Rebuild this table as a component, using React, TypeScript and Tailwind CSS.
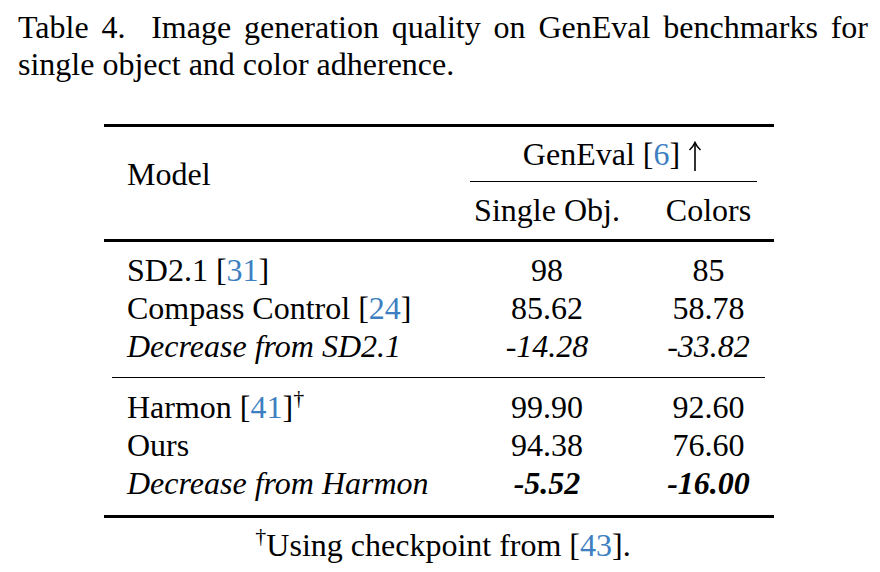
import React from 'react';

type Cell = { text: React.ReactNode; style?: 'italic' | 'bold' };

interface Row {
    model: React.ReactNode;
    single: Cell;
    colors: Cell;
}

const Cite = ({ n }: { n: number }) => <span className="text-[#3d7fc1]">{n}</span>;

// thin up arrow, drawn since the serif font has no tall arrow glyph
const UpArrow = () => (
    <svg className="inline-block align-baseline -mb-[6px]" width="14" height="30" viewBox="0 0 14 30" fill="none" stroke="black" strokeWidth="1.6">
        <path d="M7 2 V30" />
        <path d="M1.5 9 Q5 6 7 1.5 Q9 6 12.5 9" />
    </svg>
);

const groups: Row[][] = [
    [
        { model: <>SD2.1 [<Cite n={31} />]</>, single: { text: '98' }, colors: { text: '85' } },
        { model: <>Compass Control [<Cite n={24} />]</>, single: { text: '85.62' }, colors: { text: '58.78' } },
        { model: <i>Decrease from SD2.1</i>, single: { text: '-14.28', style: 'italic' }, colors: { text: '-33.82', style: 'italic' } },
    ],
    [
        { model: <>Harmon [<Cite n={41} />]<sup className="text-[22px] -top-[13px]">†</sup></>, single: { text: '99.90' }, colors: { text: '92.60' } },
        { model: <>Ours</>, single: { text: '94.38' }, colors: { text: '76.60' } },
        { model: <i>Decrease from Harmon</i>, single: { text: '-5.52', style: 'bold' }, colors: { text: '-16.00', style: 'bold' } },
    ],
];

const cellClass = (c: Cell) => {
    if (c.style === 'italic') return 'text-center italic';
    if (c.style === 'bold') return 'text-center italic font-bold';
    return 'text-center';
};

function Group({ rows }: { rows: Row[] }) {
    return (
        <div className="grid grid-cols-[347px_192px_131px] leading-[38px]">
            {rows.map((r, i) => (
                <React.Fragment key={i}>
                    <div className="pl-[23px] whitespace-nowrap">{r.model}</div>
                    <div className={cellClass(r.single)}>{r.single.text}</div>
                    <div className={cellClass(r.colors)}>{r.colors.text}</div>
                </React.Fragment>
            ))}
        </div>
    );
}

export default function App() {
    return (
        <div className="w-[880px] h-[572px] overflow-hidden bg-white text-black font-['Liberation_Serif','Times_New_Roman',serif] text-[32px]">
            <p className="pt-[9px] pl-[18px] w-[868px] leading-[37px] text-justify">
                Table 4.&nbsp; Image generation quality on GenEval benchmarks for single object and color adherence.
            </p>

            <div className="ml-[104px] mt-[41px] w-[670px]">
                <div className="h-[3px] bg-black" />

                {/* header */}
                <div className="grid grid-cols-[347px_323px] h-[112px]">
                    <div className="pl-[23px] pt-[28px] leading-[38px]">Model</div>
                    <div className="pt-[8px] flex flex-col">
                        <div className="leading-[38px] text-center">
                            GenEval [<span className="text-[#3d7fc1]">6</span>] <UpArrow />
                        </div>
                        <div className="mt-[8px] ml-[19px] mr-[17px] h-px bg-black" />
                        <div className="mt-[9px] grid grid-cols-[192px_131px] leading-[38px]">
                            <div className="text-center">Single Obj.</div>
                            <div className="text-center">Colors</div>
                        </div>
                    </div>
                </div>

                <div className="h-[3px] bg-black" />

                <div className="pt-[9px] pb-[12px]">
                    <Group rows={groups[0]} />
                </div>
                <div className="ml-[8px] mr-[9px] h-px bg-black" />
                <div className="pt-[10px] pb-[13px]">
                    <Group rows={groups[1]} />
                </div>

                <div className="h-[3px] bg-black" />
            </div>

            <p className="mt-[8px] ml-[18px] w-[850px] text-center leading-[38px]">
                <sup className="text-[22px] -top-[13px]">†</sup>Using checkpoint from [<Cite n={43} />].
            </p>
        </div>
    );
}
